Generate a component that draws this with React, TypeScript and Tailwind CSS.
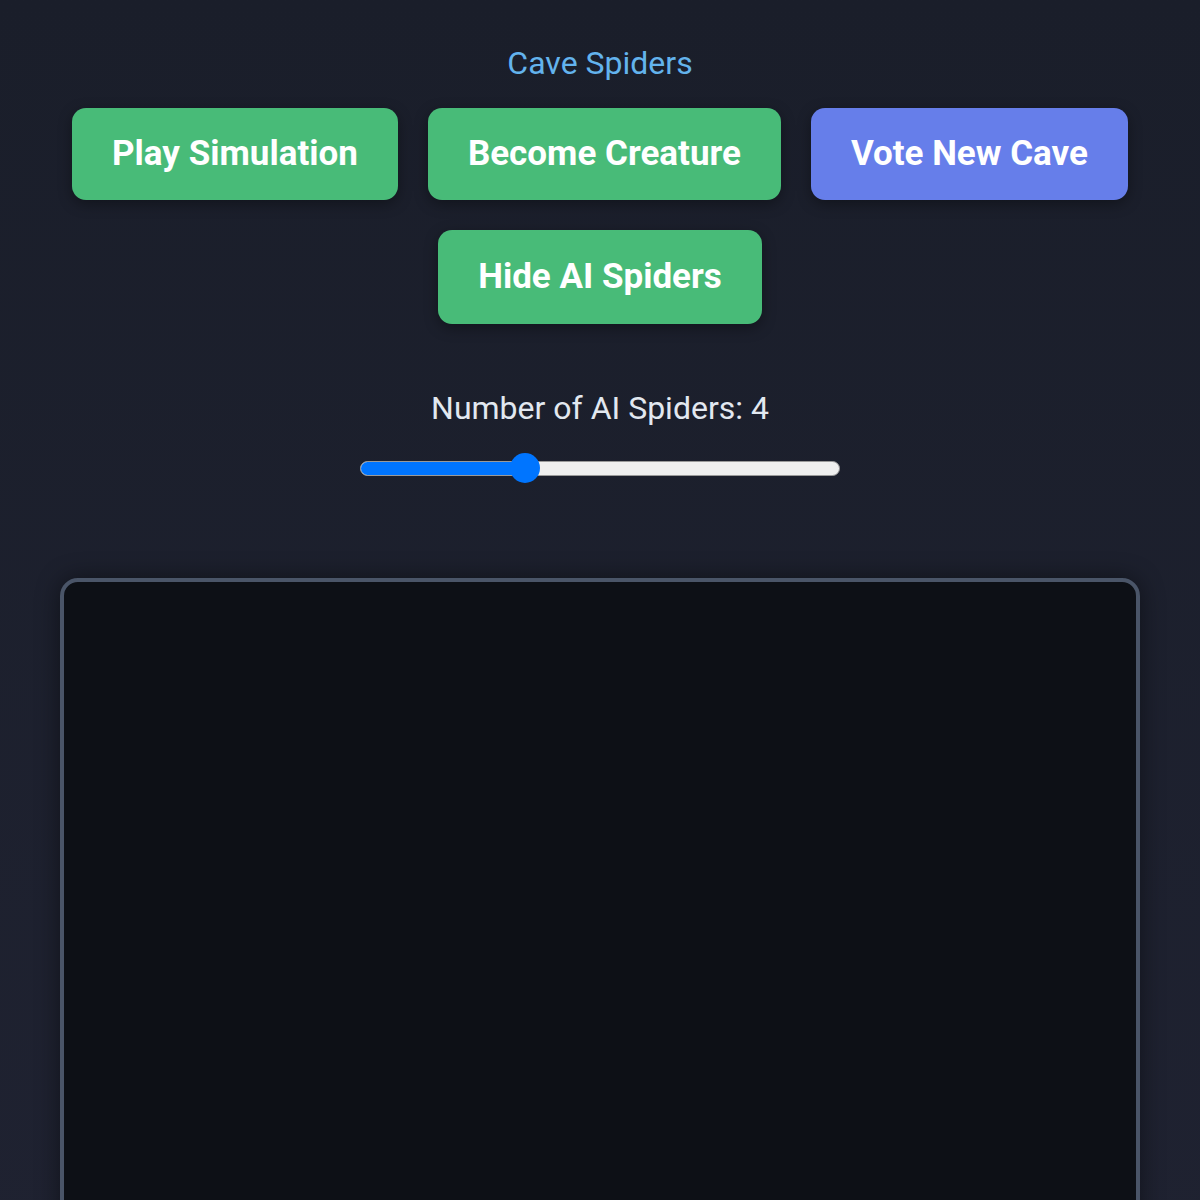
const buttonBase =
  "rounded-[14px] px-10 h-[92px] text-[35px] font-bold text-white shadow-[0_4px_14px_rgba(0,0,0,0.35)]";

const App = () => {
  const count = 4;
  const pct = ((count - 1) / 9) * 100;

  return (
    <div
      className="min-h-[1200px] bg-gradient-to-b from-[#1a1e2a] to-[#1f2231] flex flex-col items-center pt-[42px]"
      style={{ fontFamily: "Roboto, 'Liberation Sans', sans-serif" }}
    >
      <h1 className="text-[32px] leading-[42px] text-[#63b3ed]">Cave Spiders</h1>

      <div className="mt-[24px] flex flex-wrap justify-center gap-[30px] w-[1100px]">
        <button className={`${buttonBase} bg-[#48bb78]`}>Play Simulation</button>
        <button className={`${buttonBase} bg-[#48bb78]`}>Become Creature</button>
        <button className={`${buttonBase} bg-[#667eea]`}>Vote New Cave</button>
        <button className={`${buttonBase} bg-[#48bb78] h-[94px]`}>Hide AI Spiders</button>
      </div>

      <p className="mt-[64px] text-[32px] leading-[40px] text-[#e2e8f0]">
        Number of AI Spiders: {count}
      </p>

      <div className="mt-[25px] relative w-[480px] h-[30px] flex items-center">
        <div className="w-full h-[15px] rounded-full bg-[#efefef] border border-[#9a9a9a] overflow-hidden">
          <div className="h-full bg-[#0075ff]" style={{ width: `${pct}%` }} />
        </div>
        <div
          className="absolute top-0 w-[30px] h-[30px] rounded-full bg-[#0075ff]"
          style={{ left: `calc(${pct / 100} * (100% - 30px))` }}
        />
      </div>

      <div className="mt-[95px] w-[1080px] h-[700px] rounded-[18px] border-4 border-[#4a5568] bg-[#0d1016] shadow-[0_0_24px_rgba(0,0,0,0.45)]" />
    </div>
  );
};

export default App;
